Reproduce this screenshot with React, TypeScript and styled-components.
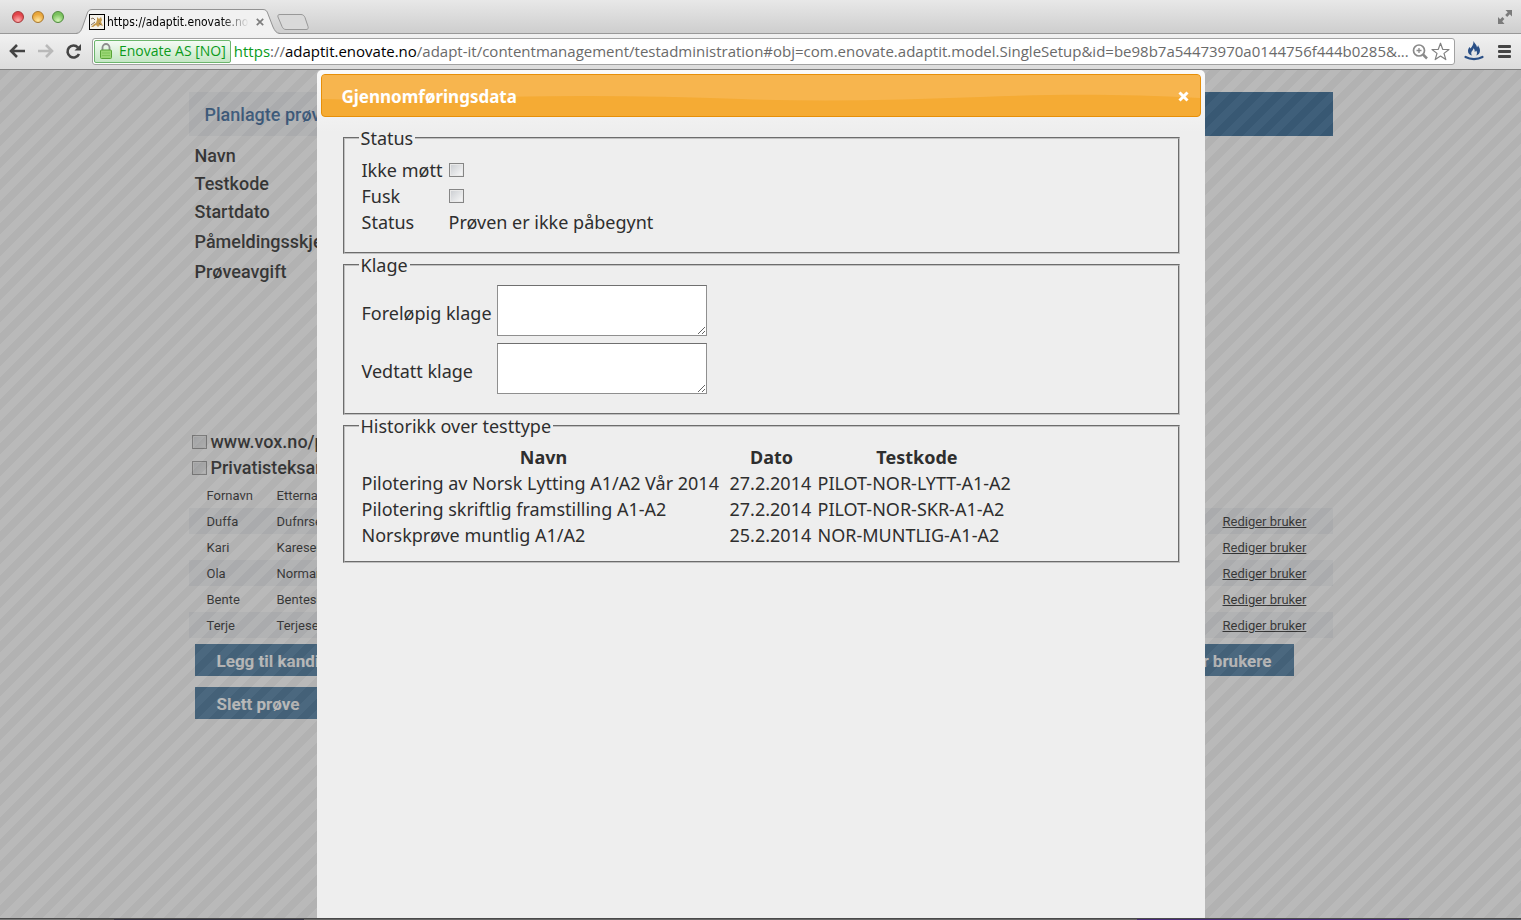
import React from "react";
import styled, { createGlobalStyle } from "styled-components";

const GlobalStyle = createGlobalStyle`
  * { box-sizing: border-box; }
  body { margin: 0; background: #fff; }
  button { font: inherit; border: 0; padding: 0; background: none; cursor: pointer; }
`;

const pageFont = `Roboto, "Liberation Sans", sans-serif`;
const dialogFont = `"Noto Sans", "Open Sans", sans-serif`;
const chromeFont = `"Open Sans", "Noto Sans", sans-serif`;

const Window = styled.div`
  min-height: 100vh;
  display: flex;
  flex-direction: column;
  overflow: hidden;
`;

/* Browser chrome */

const TabStrip = styled.header`
  display: flex;
  align-items: flex-end;
  height: 34px;
  padding: 0 8px 0 12px;
  background: linear-gradient(#e8e8e8, #cdcdcd);
  box-shadow: inset 0 -1px #989898;
`;

const WindowButtons = styled.div`
  display: flex;
  align-self: center;
  gap: 8px;
  margin-right: 12px;
`;

const Light = styled.button<{ $edge: string; $fill: string; $glow: string }>`
  width: 12px;
  height: 12px;
  border-radius: 50%;
  border: 1px solid ${(p) => p.$edge};
  background: radial-gradient(circle at 50% 85%, ${(p) => p.$glow}, ${(p) => p.$fill} 65%);
`;

const Tab = styled.div`
  position: relative;
  display: flex;
  align-items: center;
  width: 204px;
  height: 25px;
  padding: 0 16px 0 13px;
`;

const TabShape = styled.svg`
  position: absolute;
  inset: 0;
  width: 100%;
  height: 100%;
`;

const Favicon = styled.svg`
  position: relative;
  flex: none;
  width: 16px;
  height: 16px;
  margin-right: 2px;
`;

const TabTitle = styled.span`
  position: relative;
  flex: 1;
  overflow: hidden;
  white-space: nowrap;
  font: 12px/16px "DejaVu Sans Condensed", "DejaVu Sans", sans-serif;
  color: #000;
  mask-image: linear-gradient(90deg, #000 80%, transparent);
`;

const TabClose = styled.button`
  position: relative;
  display: flex;
  margin: 1px 0 0 7px;
`;

const NewTab = styled.button`
  display: flex;
  margin: 0 0 3px -4px;
`;

const FullScreen = styled.button`
  display: flex;
  align-self: center;
  margin-left: auto;
`;

const Toolbar = styled.nav`
  display: flex;
  align-items: center;
  height: 36px;
  padding: 0 8px 1px 8px;
  background: linear-gradient(#f1f1f1, #dcdcdc);
  border-bottom: 1px solid #808080;
`;

const ToolButton = styled.button`
  display: flex;
  flex: none;
`;

const Navigation = styled.div`
  display: flex;
  gap: 10px;
`;

const Extensions = styled.div`
  display: flex;
  align-items: center;
  gap: 12px;
`;

const Omnibox = styled.div`
  flex: 1;
  display: flex;
  align-items: center;
  min-width: 0;
  height: 27px;
  padding: 0 4px 0 1px;
  background: #fff;
  border: 1px solid #a2a2a2;
  border-radius: 3px;
  margin: 0 9px 0 10px;
`;

const Identity = styled.button`
  && {
    flex: none;
    display: flex;
    align-items: center;
    gap: 6px;
    height: 23px;
    padding: 0 4px;
    border: 1px solid #6cb56c;
    border-radius: 2px;
    background: linear-gradient(#f4fbf4, #c4e6c4);
    font: 14px/20px ${chromeFont};
    color: #0b9b1b;
    white-space: nowrap;
  }
`;

const Address = styled.div`
  flex: 1;
  min-width: 0;
  margin-left: 3px;
  white-space: nowrap;
  font: 15px/22px ${chromeFont};
  color: #6a6a6a;
`;

const Scheme = styled.span`
  color: #0b9b1b;
`;

const Host = styled.span`
  color: #000;
`;

const BoxIcon = styled.button`
  display: flex;
  flex: none;
  margin-left: 2px;
`;

/* Page below the dialog */

const Viewport = styled.div`
  flex: 1;
  display: grid;
  grid-template: minmax(0, 1fr) / minmax(0, 1fr);
  > * { grid-area: 1 / 1; }
`;

const Page = styled.main`
  width: 100%;
  max-width: 1144px;
  margin: 0 auto;
  padding-top: 22px;
  font: 500 18px/26px ${pageFont};
  color: #000;
`;

const Banner = styled.div`
  display: flex;
  height: 44px;
  background: #094980;
`;

const BannerTab = styled.h1`
  flex: 0 0 50%;
  margin: 0;
  padding: 1px 16px 0;
  background: #f0f2f6;
  color: #0d4989;
  font: 500 18px/44px ${pageFont};
`;

const FieldList = styled.ul`
  list-style: none;
  margin: 0;
  height: 293px;
  padding: 6px 6px 0;
`;

const FieldItem = styled.li<{ $tall?: boolean }>`
  padding-top: ${(p) => (p.$tall ? 2 : 0)}px;
  line-height: 28px;
`;

const OptionRow = styled.label`
  display: flex;
  align-items: center;
  gap: 4px;
  height: 26px;
  padding-left: 3px;
`;

const Check = styled.input`
  appearance: none;
  flex: none;
  display: block;
  width: 15px;
  height: 14px;
  margin: 0;
  border: 1px solid #858585;
  background: linear-gradient(135deg, #c9ccd0, #fafafa);
  box-shadow: inset 0 0 0 1px #e9e9e9;
`;

const Candidates = styled.table`
  width: 100%;
  margin-top: 1px;
  border-collapse: collapse;
  table-layout: fixed;
  font: 13px/24px ${pageFont};
  th, td { padding: 2px 0 0; text-align: left; font-weight: 400; white-space: nowrap; }
  th:first-child, td:first-child { width: 88px; padding-left: 18px; }
  td:last-child, th:last-child { width: 110px; }
  tbody tr:nth-child(odd) { background: #f0f2f6; }
`;

const EditLink = styled.a`
  color: #000;
`;

const Actions = styled.div`
  display: flex;
  justify-content: space-between;
  padding: 6px 39px 5px 6px;
`;

const Action = styled.button`
  && {
    height: 32px;
    padding: 2px 22px 0;
    background: #215b8b;
    color: #fff;
    font: 700 17px/30px ${pageFont};
  }
`;

const Overlay = styled.div`
  position: relative;
  opacity: 0.5;
  background: #757575
    linear-gradient(135deg, #676767 25%, #757575 25% 50%, #676767 50% 75%, #757575 75%) 0 0 / 22px 22px;
`;

/* Dialog */

const Dialog = styled.section`
  position: relative;
  width: 100%;
  max-width: 888px;
  margin: 0 auto;
  padding: 4px;
  border-radius: 5px 5px 0 0;
  background: linear-gradient(#fafafa, #eee 62px);
  font: 18px/22px ${dialogFont};
  color: #2e2e2e;
`;

const TitleBar = styled.div`
  position: relative;
  display: flex;
  align-items: center;
  justify-content: space-between;
  height: 43px;
  padding: 2px 11px 0 20px;
  border: 1px solid #e78f08;
  border-radius: 4px;
  background: #f5ab34;
  overflow: hidden;
`;

const Gloss = styled.svg`
  position: absolute;
  inset: 0;
  width: 100%;
  height: 100%;
`;

const Title = styled.h2`
  position: relative;
  margin: 0;
  font: 700 17px/24px ${dialogFont};
  color: #fff;
`;

const CloseButton = styled.button`
  position: relative;
  display: flex;
`;

const DialogBody = styled.form`
  padding: 10px 21px 0 22px;
`;

const Group = styled.fieldset<{ $top?: number; $bottom: number }>`
  margin: 0;
  min-width: 0;
  padding: ${(p) => p.$top ?? 7}px 14px ${(p) => p.$bottom}px;
  border: 2px groove #c0c0c0;
`;

const Legend = styled.legend`
  padding: 0 2px;
`;

const Grid = styled.table`
  border-spacing: 2px;
  th, td { height: 24px; padding: 0 1px; white-space: nowrap; }
  td { text-align: left; }
`;

const LabelCol = styled.col<{ $w: number }>`
  width: ${(p) => p.$w}px;
`;

const Note = styled.textarea`
  display: block;
  width: 210px;
  height: 51px;
  margin: 0 0 5px;
  padding: 2px;
  border: 1px solid #8f8f8f;
  border-top-color: #6f6f6f;
  background: #fff;
  font: 16px/20px ${dialogFont};
`;

const DesktopEdge = styled.footer`
  height: 2px;
  background: linear-gradient(90deg, #777 0 80px, #555 80px 114px, #343442 114px 304px, #666 304px 1137px, #472a78 1137px 1409px, #5a5f68 1409px);
  border-top: 1px solid #4a4a4a;
`;

const fields = [
  { name: "Navn" },
  { name: "Testkode" },
  { name: "Startdato" },
  { name: "Påmeldingsskjema", tall: true },
  { name: "Prøveavgift", tall: true },
];

const candidates = [
  ["Duffa", "Dufnrsen"],
  ["Kari", "Karesen"],
  ["Ola", "Normann"],
  ["Bente", "Bentesen"],
  ["Terje", "Terjesen"],
];

const history = [
  ["Pilotering av Norsk Lytting A1/A2 Vår 2014", "27.2.2014", "PILOT-NOR-LYTT-A1-A2"],
  ["Pilotering skriftlig framstilling A1-A2", "27.2.2014", "PILOT-NOR-SKR-A1-A2"],
  ["Norskprøve muntlig A1/A2", "25.2.2014", "NOR-MUNTLIG-A1-A2"],
];

const BrowserTabs = () => (
  <TabStrip>
    <WindowButtons>
      <Light aria-label="Close" $edge="#a33638" $fill="#e2444a" $glow="#ffb0ae" />
      <Light aria-label="Minimize" $edge="#a8762c" $fill="#e9a63a" $glow="#ffe7a0" />
      <Light aria-label="Zoom" $edge="#4d8a3c" $fill="#79c15c" $glow="#d3f5b8" />
    </WindowButtons>
    <Tab>
      <TabShape viewBox="0 0 204 25" preserveAspectRatio="none" aria-hidden="true">
        <path d="M0 25C4 24 5 22 6.500 18L11 5C12 2 13 .5 16 .5H187C190 .5 191 2 192 5L197 18C199 22 200 24 204 25Z" fill="#f1f1f1" />
        <path d="M0 24.500C4 24 5 22 6.500 18L11 5C12 2 13 .5 16 .5H187C190 .5 191 2 192 5L197 18C199 22 200 24 204 24.500" fill="none" stroke="#929292" />
      </TabShape>
      <Favicon viewBox="0 0 16 16" aria-hidden="true">
        <rect x=".5" y=".5" width="15" height="15" fill="#f4f1ea" stroke="#000" />
        <path d="M2 13 5 10 7 9 8 6 8 3 10 5 12 3 13 6 12 8 14 12 11 11 9 13 7 11 4 13Z" fill="#c59a4c" />
        <path d="M2 5 4 4 6 6M2 11 6 8M10 9 12 11" fill="none" stroke="#807060" />
      </Favicon>
      <TabTitle>https://adaptit.enovate.no</TabTitle>
      <TabClose aria-label="Close tab">
        <svg width="8" height="8" viewBox="0 0 8 8" fill="none" stroke="#7d7d7d" strokeWidth="1.700">
          <path d="M.8.8l6.400 6.400M7.200.8.8 7.200" />
        </svg>
      </TabClose>
    </Tab>
    <NewTab aria-label="New tab">
      <svg width="34" height="18" viewBox="0 0 34 18">
        <path d="M4 1.500h21c2 0 3 1 4 3l3 9c.6 2 0 3-2 3H10c-2 0-3-1-4-3L2 4c-.5-1.500 0-2.500 2-2.500Z" fill="#d9d9d9" stroke="#989898" />
      </svg>
    </NewTab>
    <FullScreen aria-label="Full screen">
      <svg width="16" height="16" viewBox="0 0 16 16" fill="#7b7b7b">
        <path d="M8.500 1H15v6.500l-2.200-2.200-2.600 2.600-2-2 2.600-2.600ZM1 8l2.200 2.200 2.200-2.200 2 2-2.200 2.200L7.500 15H1Z" />
      </svg>
    </FullScreen>
  </TabStrip>
);

const BrowserToolbar = () => (
  <Toolbar>
    <Navigation>
      <ToolButton aria-label="Back">
        <svg width="18" height="18" viewBox="0 0 18 18" fill="none" stroke="#444" strokeWidth="2.600">
          <path d="M17 9H4M9 3 3 9 9 15" />
        </svg>
      </ToolButton>
      <ToolButton aria-label="Forward">
        <svg width="18" height="18" viewBox="0 0 18 18" fill="none" stroke="#b9b9b9" strokeWidth="2.600">
          <path d="M2 9h13M10 3 16 9 10 15" />
        </svg>
      </ToolButton>
      <ToolButton aria-label="Reload">
        <svg width="18" height="18" viewBox="0 0 18 18" fill="none" stroke="#444" strokeWidth="2.600">
          <path d="M15 12A6 6 0 1 1 14 5.500" />
          <path d="M17 2V8.500H10.500Z" fill="#444" stroke="none" />
        </svg>
      </ToolButton>
    </Navigation>
    <Omnibox>
      <Identity>
        <svg width="14" height="16" viewBox="0 0 14 16">
          <path d="M3.500 8V4.500a3.500 3.500 0 0 1 7 0V8" fill="none" stroke="#8d8d8d" strokeWidth="1.800" />
          <rect x="1.500" y="7" width="11" height="8.500" rx="1" fill="#9ad674" stroke="#58a336" />
          <path d="M3 10h8M3 12.500h8" stroke="#7fc458" />
        </svg>
        Enovate AS [NO]
      </Identity>
      <Address role="textbox" aria-label="Address">
        <Scheme>https</Scheme>://<Host>adaptit.enovate.no</Host>/adapt-it/contentmanagement/testadministration#obj=com.enovate.adaptit.model.SingleSetup&amp;id=be98b7a54473970a0144756f444b0285&amp;...
      </Address>
      <BoxIcon aria-label="Zoom">
        <svg width="17" height="17" viewBox="0 0 17 17" fill="none" stroke="#8a8a8a">
          <circle cx="7" cy="7.500" r="5.500" strokeWidth="1.700" />
          <path d="M4.500 7.500h5M7 5v5" strokeWidth="1.300" />
          <path d="m11 11.500 4 4" strokeWidth="2.500" />
        </svg>
      </BoxIcon>
      <BoxIcon aria-label="Bookmark">
        <svg width="19" height="19" viewBox="0 0 19 19" fill="#fff" stroke="#808080" strokeWidth="1.200" strokeLinejoin="round">
          <path d="m9.500 1.200 2.200 6.100 6.300.2-5 3.900 1.800 6.200-5.300-3.600-5.300 3.600L6 11.400 1 7.500l6.300-.2Z" />
        </svg>
      </BoxIcon>
    </Omnibox>
    <Extensions>
      <ToolButton aria-label="Extension">
        <svg width="20" height="20" viewBox="0 0 20 20">
          <path d="M9.500 0c1 2.500 3.500 4 3.500 6.500l1.200-2.200c.2 1.600 1.800 2.700 1.800 5.200 0 2.600-1.400 4.500-3.800 5 1.200-1.500 1-3.700-.2-5-.4 1-.8 1.300-1.300 1.500.2-1.500-.2-2.700-1.200-3.700 0 2-2.300 2.700-2.300 4.900 0 .9.400 1.700 1 2.300C5.500 14 4 12.500 4 10c0-1.700.8-2.900 1.600-4l.9 1.600C8 5.500 9.800 3.500 9.500 0Z" fill="#2a4f86" />
          <path d="M1.500 16c5 2.700 12 2.700 17 0" fill="none" stroke="#2a4f86" strokeWidth="2.200" strokeLinecap="round" />
        </svg>
      </ToolButton>
      <ToolButton aria-label="Menu">
        <svg width="17" height="14" viewBox="0 0 17 14" fill="#444">
          <rect x="2" y="1" width="13" height="3" rx="1" />
          <rect x="2" y="6" width="13" height="3" rx="1" />
          <rect x="2" y="11" width="13" height="3" rx="1" />
        </svg>
      </ToolButton>
    </Extensions>
  </Toolbar>
);

const TestPage = () => (
  <Page>
    <Banner>
      <BannerTab>Planlagte prøver</BannerTab>
    </Banner>
    <FieldList>
      {fields.map((f) => (
        <FieldItem key={f.name} $tall={f.tall}>{f.name}</FieldItem>
      ))}
    </FieldList>
    <OptionRow>
      <Check type="checkbox" />
      www.vox.no/p
    </OptionRow>
    <OptionRow>
      <Check type="checkbox" />
      Privatisteksamen
    </OptionRow>
    <Candidates>
      <thead>
        <tr><th>Fornavn</th><th>Etternavn</th><th /></tr>
      </thead>
      <tbody>
        {candidates.map(([first, last]) => (
          <tr key={first}>
            <td>{first}</td>
            <td>{last}</td>
            <td><EditLink href="#edit">Rediger bruker</EditLink></td>
          </tr>
        ))}
      </tbody>
    </Candidates>
    <Actions>
      <Action>Legg til kandidater</Action>
      <Action>Importer brukere</Action>
    </Actions>
    <Actions>
      <Action>Slett prøve</Action>
    </Actions>
  </Page>
);

const RunDialog = () => (
  <Dialog role="dialog" aria-labelledby="dialog-title">
    <TitleBar>
      <Gloss viewBox="0 0 880 41" preserveAspectRatio="none" aria-hidden="true">
        <path d="M0 0H880V23C800 19 740 19 660 22S500 27 420 24 260 20 180 22 60 26 0 24Z" fill="#f7b54e" />
      </Gloss>
      <Title id="dialog-title">Gjennomføringsdata</Title>
      <CloseButton aria-label="Lukk">
        <svg width="11" height="11" viewBox="0 0 11 11" fill="none" stroke="#fff" strokeWidth="3">
          <path d="m1.500 1.500 8 8M9.500 1.500l-8 8" />
        </svg>
      </CloseButton>
    </TitleBar>
    <DialogBody>
      <Group $bottom={16}>
        <Legend>Status</Legend>
        <Grid>
          <colgroup><LabelCol $w={85} /></colgroup>
          <tbody>
            <tr>
              <td><label htmlFor="absent">Ikke møtt</label></td>
              <td><Check type="checkbox" id="absent" /></td>
            </tr>
            <tr>
              <td><label htmlFor="cheating">Fusk</label></td>
              <td><Check type="checkbox" id="cheating" /></td>
            </tr>
            <tr>
              <td>Status</td>
              <td>Prøven er ikke påbegynt</td>
            </tr>
          </tbody>
        </Grid>
      </Group>
      <Group $bottom={12}>
        <Legend>Klage</Legend>
        <Grid>
          <colgroup><LabelCol $w={133} /></colgroup>
          <tbody>
            <tr>
              <td><label htmlFor="preliminary">Foreløpig klage</label></td>
              <td><Note id="preliminary" /></td>
            </tr>
            <tr>
              <td><label htmlFor="decided">Vedtatt klage</label></td>
              <td><Note id="decided" /></td>
            </tr>
          </tbody>
        </Grid>
      </Group>
      <Group $top={6} $bottom={12}>
        <Legend>Historikk over testtype</Legend>
        <Grid>
          <colgroup><LabelCol $w={366} /><LabelCol $w={86} /><LabelCol $w={201} /></colgroup>
          <thead>
            <tr><th>Navn</th><th>Dato</th><th>Testkode</th></tr>
          </thead>
          <tbody>
            {history.map((row) => (
              <tr key={row[2]}>
                {row.map((cell) => <td key={cell}>{cell}</td>)}
              </tr>
            ))}
          </tbody>
        </Grid>
      </Group>
    </DialogBody>
  </Dialog>
);

export default function App() {
  return (
    <>
      <GlobalStyle />
      <Window>
        <BrowserTabs />
        <BrowserToolbar />
        <Viewport>
          <TestPage />
          <Overlay />
          <RunDialog />
        </Viewport>
        <DesktopEdge />
      </Window>
    </>
  );
}
